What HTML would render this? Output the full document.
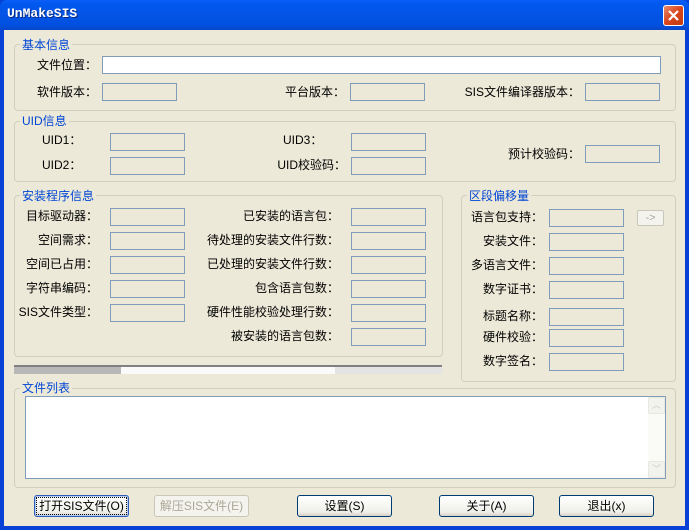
<!DOCTYPE html>
<html><head><meta charset="utf-8">
<style>
*{margin:0;padding:0;box-sizing:border-box}
body{width:689px;height:530px;overflow:hidden;background:#0841d6;font-family:"Liberation Sans","Noto Sans CJK SC",sans-serif;font-size:12px;color:#000;position:relative}
#title{position:absolute;left:0;top:0;width:689px;height:30px;background:linear-gradient(#0a5ef7 0%,#0058ee 15%,#0453e6 50%,#0050e0 85%,#0a46c8 100%);border-radius:7px 7px 0 0}
#title span{position:absolute;left:7px;top:6px;color:#fff;font-weight:bold;font-size:13px;font-family:"Liberation Mono","Noto Sans CJK SC",monospace;text-shadow:1px 1px #0a2a80}
#close{position:absolute;left:663px;top:5px;width:21px;height:21px;border:1px solid #fff;border-radius:3px;background:linear-gradient(135deg,#e88c6c,#d9451c 50%,#c23a10)}
#body{position:absolute;left:4px;top:30px;width:681px;height:496px;background:#ece9d8}
#w{position:absolute;left:0;top:0;width:689px;height:530px}
.g{position:absolute;border:1px solid #d0d0bf;border-radius:4px}
.gt{position:absolute;color:#0046d5;background:#ece9d8;padding:0 2px;line-height:14px;white-space:nowrap}
.l{position:absolute;white-space:nowrap;line-height:14px;text-align:right}
.b{position:absolute;width:75px;height:18px;border:1px solid #7f9db9;background:#ece9d8}
.btn{position:absolute;top:495px;width:95px;height:22px;border:1px solid #003c74;border-radius:3px;background:linear-gradient(#fff,#f0f0ea 80%,#d6d0c5);text-align:center;line-height:20px;white-space:nowrap}
</style></head><body>
<div id="title"><span>UnMakeSIS</span><div id="close"><svg width="19" height="19" viewBox="0 0 19 19"><path d="M5 5L14 14M14 5L5 14" stroke="#fff" stroke-width="2.2"/></svg></div></div>
<div id="body"></div>
<div id="w">
<div class="g" style="left:14px;top:44px;width:662px;height:67px"></div>
<div class="gt" style="left:20px;top:38px">基本信息</div>
<div class="g" style="left:14px;top:121px;width:662px;height:61px"></div>
<div class="gt" style="left:20px;top:114px">UID信息</div>
<div class="g" style="left:14px;top:195px;width:429px;height:162px"></div>
<div class="gt" style="left:20px;top:189px">安装程序信息</div>
<div class="g" style="left:461px;top:195px;width:215px;height:187px"></div>
<div class="gt" style="left:467px;top:189px">区段偏移量</div>
<div class="g" style="left:14px;top:388px;width:662px;height:100px"></div>
<div class="gt" style="left:20px;top:381px">文件列表</div>

<div class="l" style="right:592px;top:58px">文件位置：</div>
<div class="b" style="left:102px;top:56px;width:559px;background:#fff"></div>
<div class="l" style="right:592px;top:85px">软件版本：</div>
<div class="b" style="left:102px;top:83px"></div>
<div class="l" style="right:344px;top:85px">平台版本：</div>
<div class="b" style="left:350px;top:83px"></div>
<div class="l" style="right:109px;top:85px">SIS文件编译器版本：</div>
<div class="b" style="left:585px;top:83px"></div>

<div class="l" style="left:42px;top:133px">UID1：</div>
<div class="b" style="left:110px;top:133px"></div>
<div class="l" style="left:42px;top:158px">UID2：</div>
<div class="b" style="left:110px;top:157px"></div>
<div class="l" style="left:283px;top:133px">UID3：</div>
<div class="b" style="left:351px;top:133px"></div>
<div class="l" style="right:343px;top:158px">UID校验码：</div>
<div class="b" style="left:351px;top:157px"></div>
<div class="l" style="right:109px;top:147px">预计校验码：</div>
<div class="b" style="left:585px;top:145px"></div>

<div class="l" style="right:591px;top:209px">目标驱动器：</div><div class="b" style="left:110px;top:208px"></div>
<div class="l" style="right:591px;top:233px">空间需求：</div><div class="b" style="left:110px;top:232px"></div>
<div class="l" style="right:591px;top:257px">空间已占用：</div><div class="b" style="left:110px;top:256px"></div>
<div class="l" style="right:591px;top:281px">字符串编码：</div><div class="b" style="left:110px;top:280px"></div>
<div class="l" style="right:591px;top:305px">SIS文件类型：</div><div class="b" style="left:110px;top:304px"></div>
<div class="l" style="right:350px;top:209px">已安装的语言包：</div><div class="b" style="left:351px;top:208px"></div>
<div class="l" style="right:350px;top:233px">待处理的安装文件行数：</div><div class="b" style="left:351px;top:232px"></div>
<div class="l" style="right:350px;top:257px">已处理的安装文件行数：</div><div class="b" style="left:351px;top:256px"></div>
<div class="l" style="right:350px;top:281px">包含语言包数：</div><div class="b" style="left:351px;top:280px"></div>
<div class="l" style="right:350px;top:305px">硬件性能校验处理行数：</div><div class="b" style="left:351px;top:304px"></div>
<div class="l" style="right:350px;top:329px">被安装的语言包数：</div><div class="b" style="left:351px;top:328px"></div>

<div class="l" style="right:146px;top:210px">语言包支持：</div><div class="b" style="left:549px;top:209px"></div>
<div class="l" style="right:146px;top:234px">安装文件：</div><div class="b" style="left:549px;top:233px"></div>
<div class="l" style="right:146px;top:258px">多语言文件：</div><div class="b" style="left:549px;top:257px"></div>
<div class="l" style="right:146px;top:282px">数字证书：</div><div class="b" style="left:549px;top:281px"></div>
<div class="l" style="right:146px;top:309px">标题名称：</div><div class="b" style="left:549px;top:308px"></div>
<div class="l" style="right:146px;top:330px">硬件校验：</div><div class="b" style="left:549px;top:329px"></div>
<div class="l" style="right:146px;top:354px">数字签名：</div><div class="b" style="left:549px;top:353px"></div>
<div style="position:absolute;left:637px;top:210px;width:27px;height:16px;border:1px solid #c9c7ba;border-radius:2px;background:#f4f3ee;color:#aca899;text-align:center;line-height:14px;font-size:11px">-&gt;</div>

<div style="position:absolute;left:14px;top:365px;width:428px;height:2px;background:#808080"></div>
<div style="position:absolute;left:14px;top:367px;width:107px;height:7px;background:#b8b8b8"></div>
<div style="position:absolute;left:121px;top:367px;width:214px;height:7px;background:#fafafa"></div>
<div style="position:absolute;left:335px;top:367px;width:107px;height:7px;background:#e4e4e4"></div>

<div style="position:absolute;left:25px;top:396px;width:641px;height:83px;border:1px solid #7f9db9;background:#fff"></div>
<div style="position:absolute;left:648px;top:397px;width:17px;height:81px;background:#fafaf7"></div>
<div style="position:absolute;left:648px;top:397px;width:17px;height:17px;border:1px solid #e8e8e2;border-radius:2px;background:#f3f3ee;color:#c8c8c0;font-size:9px;text-align:center;line-height:15px">︿</div>
<div style="position:absolute;left:648px;top:461px;width:17px;height:17px;border:1px solid #e8e8e2;border-radius:2px;background:#f3f3ee;color:#c8c8c0;font-size:9px;text-align:center;line-height:15px">﹀</div>

<div class="btn" style="left:34px;border-color:#2c5bb8;box-shadow:inset 0 0 0 1px #b6cdf3"><span style="outline:1px dotted #000;outline-offset:1px;padding:0 1px">打开SIS文件(O)</span></div>
<div class="btn" style="left:154px;border-color:#c9c7ba;background:#f4f3ee;color:#aca899">解压SIS文件(E)</div>
<div class="btn" style="left:297px">设置(S)</div>
<div class="btn" style="left:439px">关于(A)</div>
<div class="btn" style="left:559px">退出(x)</div>
</div>
</body></html>
